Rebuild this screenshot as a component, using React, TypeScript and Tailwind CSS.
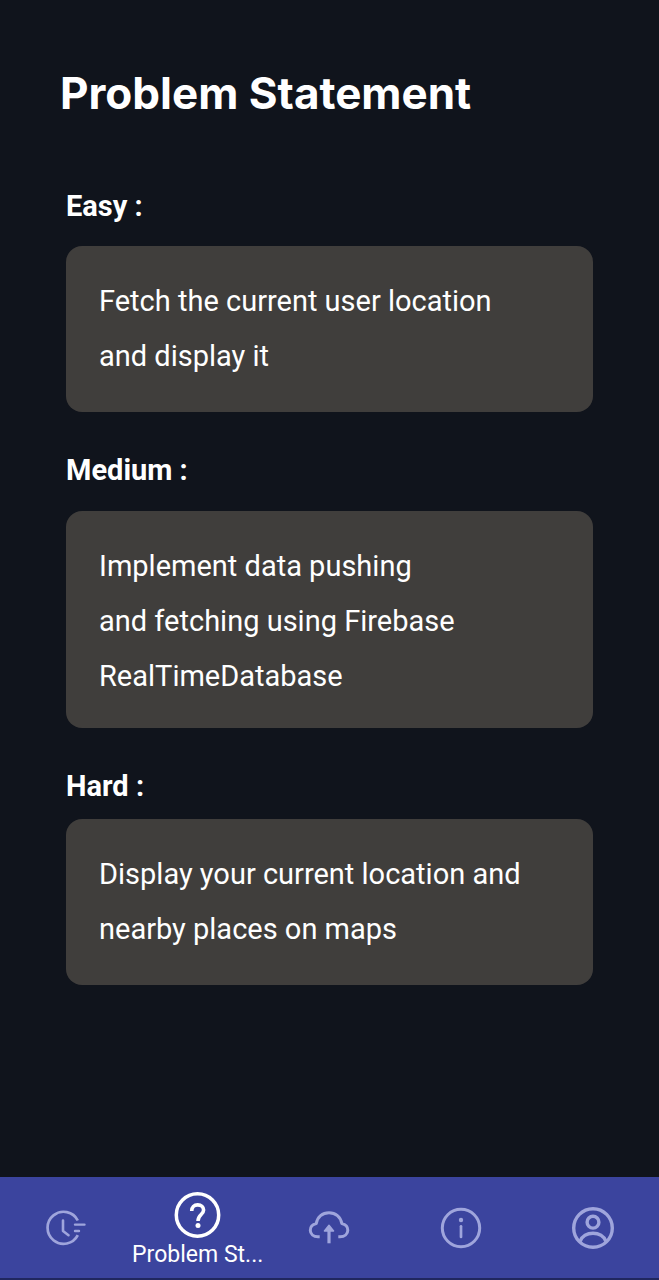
import type { ReactNode } from "react";

type Level = { id: string; label: string; lines: string[]; spacing: string; card: string };

const levels: Level[] = [
  { id: "easy", label: "Easy :", lines: ["Fetch the current user location", "and display it"], spacing: "mt-[67px]", card: "mt-[22px] pb-7" },
  { id: "medium", label: "Medium :", lines: ["Implement data pushing", "and fetching using Firebase", "RealTimeDatabase"], spacing: "mt-10", card: "mt-[23px] pb-6" },
  { id: "hard", label: "Hard :", lines: ["Display your current location and", "nearby places on maps"], spacing: "mt-10", card: "mt-[15px] pb-7" },
];

function Icon({ children }: { children: ReactNode }) {
  return (
    <svg
      viewBox="0 0 48 48"
      className="size-12 shrink-0"
      fill="none"
      stroke="currentColor"
      strokeWidth="3"
      strokeLinecap="round"
      strokeLinejoin="round"
      aria-hidden="true"
    >
      {children}
    </svg>
  );
}

const tabs: { name: string; icon: ReactNode }[] = [
  {
    name: "Timeline",
    icon: (
      <Icon>
        <path d="M35.800 16.500A16 16 0 1 0 35.800 31.100" strokeWidth="2.700" strokeLinecap="butt" />
        <path d="M21 16.500v10.500l5.500 4.200" strokeWidth="2.600" />
        <path d="M33 20.600h9.500M33 27h4" strokeWidth="2.400" />
      </Icon>
    ),
  },
  {
    name: "Problem Statement",
    icon: (
      <Icon>
        <circle cx="23.500" cy="24" r="21.200" strokeWidth="3.500" />
        <path d="M17.700 20c0-3.800 2.400-6.100 6-6.100 3.500 0 5.900 2.200 5.900 5.200 0 4.500-5.600 4.600-5.600 10.900" strokeWidth="3.600" strokeLinecap="butt" />
        <circle cx="24" cy="34.600" r="2.500" fill="currentColor" stroke="none" />
      </Icon>
    ),
  },
  {
    name: "Upload",
    icon: (
      <Icon>
        <path d="M14.700 32.800H13C8.300 32.800 5.300 30 5.300 26.300c0-3.500 2.400-6 6-6.700C12.300 12.800 17.500 8.800 24 8.800c6.500 0 11.700 4 12.800 10.800 3.600.7 6 3.200 6 6.700 0 3.700-3.100 6.500-7.800 6.500h-1.700" strokeWidth="3" strokeLinecap="butt" />
        <path d="M24 39.300V26" strokeWidth="3.200" strokeLinecap="butt" />
        <path d="M19.400 27 24 21.200 28.600 27z" fill="currentColor" strokeWidth="1.400" />
      </Icon>
    ),
  },
  {
    name: "Information",
    icon: (
      <Icon>
        <circle cx="24" cy="24" r="18.700" />
        <circle cx="24" cy="16" r="2.200" fill="currentColor" stroke="none" />
        <path d="M24 22.300v10.600" strokeWidth="2.700" />
      </Icon>
    ),
  },
  {
    name: "Profile",
    icon: (
      <Icon>
        <circle cx="24" cy="24" r="19.300" strokeWidth="3.400" />
        <circle cx="24" cy="18.200" r="5.900" strokeWidth="3.400" />
        <path d="M11.200 37.200c1.800-5 7-8 12.800-8s11 3 12.800 8" strokeWidth="3.400" />
      </Icon>
    ),
  },
];

export default function App() {
  return (
    <div className="flex min-h-screen flex-col bg-[#10141c] font-['Roboto',sans-serif] text-white">
      <main className="flex-1 px-[66px] pt-[65px] pb-12">
        <h1 className="-ml-1.5 font-['Inter',sans-serif] text-[44px] leading-[56px] font-bold">Problem Statement</h1>
        {levels.map((level) => (
          <section key={level.id} className={level.spacing} aria-labelledby={level.id}>
            <h2 id={level.id} className="text-[29px] leading-9 font-bold">
              {level.label}
            </h2>
            <p className={`${level.card} rounded-[16px] bg-[#403e3c] px-[33px] pt-7 text-[29px] leading-[55px]`}>
              {level.lines.map((line) => (
                <span key={line} className="block">{line}</span>
              ))}
            </p>
          </section>
        ))}
      </main>
      <nav className="grid h-[103px] grid-cols-5 border-b-2 border-[#20275f] bg-[#3b449e]" aria-label="Main">
        {tabs.map((tab) => {
          const active = tab.name === "Problem Statement";
          return (
            <button
              key={tab.name}
              type="button"
              aria-label={tab.name}
              aria-current={active ? "page" : undefined}
              className={`flex min-w-0 flex-col items-center ${active ? "pt-[14px] text-white" : "justify-center text-[#9fa5dc]"}`}
            >
              {tab.icon}
              {active && <span className="text-[23px] leading-8">Problem St...</span>}
            </button>
          );
        })}
      </nav>
    </div>
  );
}
